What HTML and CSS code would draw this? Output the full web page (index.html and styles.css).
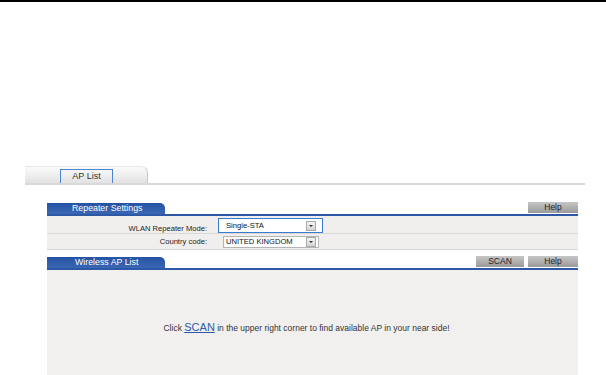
FILE: index.html
```html
<!DOCTYPE html>
<html>
<head>
<meta charset="utf-8">
<link rel="stylesheet" href="styles.css">
</head>
<body>
<div class="topbar"></div>
<div class="tabs">
  <div class="tab"><span class="tab-btn">AP List</span></div>
</div>
<div class="section sec-settings">
  <div class="sec-head">
    <div class="sec-title">Repeater Settings</div>
    <div class="spacer"></div>
    <div class="btn">Help</div>
  </div>
  <div class="rows">
    <div class="row row-first">
      <div class="label">WLAN Repeater Mode:</div>
      <div class="select select-focus"><span class="sel-text">Single-STA</span><span class="arrow"></span></div>
    </div>
    <div class="row">
      <div class="label">Country code:</div>
      <div class="select select-plain"><span class="sel-text">UNITED KINGDOM</span><span class="arrow"></span></div>
    </div>
  </div>
</div>
<div class="section sec-list">
  <div class="sec-head">
    <div class="sec-title sec-title-list">Wireless AP List</div>
    <div class="spacer"></div>
    <div class="btn btn-scan">SCAN</div>
    <div class="btn">Help</div>
  </div>
  <div class="panel">
    <p class="hint">Click <a class="scan-link" href="#">SCAN</a> in the upper right corner to find available AP in your near side!</p>
  </div>
</div>
</body>
</html>
```
FILE: styles.css
```css
html, body {
  margin: 0;
  padding: 0;
  background: #ffffff;
  font-family: "Liberation Sans", Arial, sans-serif;
  color: #222;
  overflow: hidden;
}
.topbar {
  height: 2px;
  background: #000;
}
.tabs {
  margin: 164px 21px 0 25px;
  border-bottom: 2px solid #d9d9d9;
  display: flex;
}
.tab {
  width: 122px;
  height: 16px;
  background: linear-gradient(#fbfbfb, #e2e2e2);
  border-top: 1px solid #e6e6e6;
  border-right: 1px solid #c8c8c8;
  border-top-right-radius: 7px;
  display: flex;
  align-items: flex-end;
}
.tab-btn {
  margin-left: 35px;
  width: 51px;
  height: 13px;
  border: 1px solid #4a86cf;
  border-bottom: none;
  font-size: 9px;
  line-height: 13px;
  text-align: center;
  color: #333;
}
.section {
  margin: 0 28px 0 47px;
}
.sec-settings { margin-top: 17px; }
.sec-list { margin-top: 6px; }
.sec-head {
  display: flex;
  align-items: flex-end;
  border-bottom: 2px solid #2c58a6;
}
.sec-title {
  width: 93px;
  height: 11px;
  padding-left: 25px;
  background: linear-gradient(#2553a3, #3a66b4);
  border-top-right-radius: 5px;
  color: #fff;
  font-size: 8.8px;
  line-height: 11px;
}
.sec-title-list { width: 90px; padding-left: 28px; }
.spacer { flex: 1; }
.btn {
  width: 50px;
  height: 11px;
  margin-bottom: 1px;
  background: linear-gradient(#c6c6c6, #9a9a9a);
  color: #222;
  font-size: 8.5px;
  line-height: 11px;
  text-align: center;
}
.btn-scan { width: 48px; margin-right: 4px; }
.rows {
  background: #f0efee;
}
.row {
  display: flex;
  align-items: center;
  height: 15px;
  border-bottom: 1px solid #d8d8d8;
}
.row-first { height: 17px; align-items: flex-end; }
.label {
  width: 160px;
  text-align: right;
  font-size: 7.6px;
  color: #222;
}
.select {
  display: flex;
  align-items: center;
  background: #fff;
  font-size: 7.6px;
  color: #111;
  box-sizing: border-box;
}
.select-focus {
  margin-left: 11px;
  width: 105px;
  height: 15px;
  border: 1px solid #3b7bd0;
  padding-left: 7px;
}
.select-plain {
  margin-left: 16px;
  width: 96px;
  height: 12px;
  border: 1px solid #b5b5b5;
  padding-left: 2px;
}
.sel-text { flex: 1; }
.arrow {
  width: 8px;
  height: 8px;
  margin-right: 6px;
  border: 1px solid #a9a9a9;
  background: linear-gradient(#f3f3f3, #d4d4d4);
  position: relative;
}
.select-plain .arrow { margin-right: 2px; }
.arrow::after {
  content: "";
  position: absolute;
  left: 2px;
  top: 3px;
  border-left: 2px solid transparent;
  border-right: 2px solid transparent;
  border-top: 2px solid #333;
}
.panel {
  background: #f1f0ef;
  height: 110px;
  padding-top: 51px;
  box-sizing: border-box;
}
.hint {
  margin: 0;
  text-align: center;
  font-size: 8.5px;
  color: #333;
  padding-right: 12px;
}
.scan-link {
  font-size: 11px;
  color: #2b5ca8;
  text-decoration: underline;
}
```
